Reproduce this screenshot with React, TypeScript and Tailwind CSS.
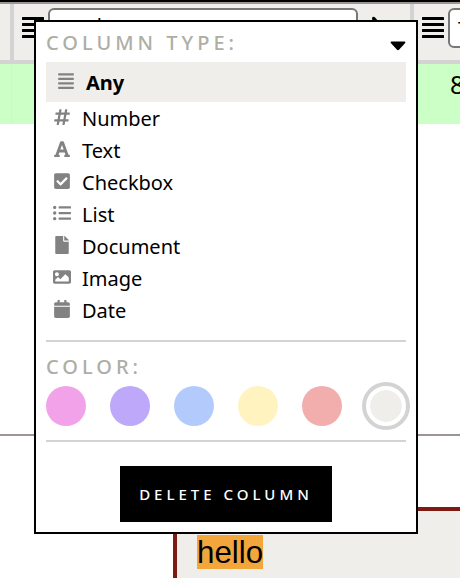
import React from "react";
import {
  FaAlignJustify,
  FaHashtag,
  FaFont,
  FaCheckSquare,
  FaListUl,
  FaFile,
  FaImage,
  FaCalendar,
} from "react-icons/fa";

const types = [
  { name: "Number", Icon: FaHashtag },
  { name: "Text", Icon: FaFont },
  { name: "Checkbox", Icon: FaCheckSquare },
  { name: "List", Icon: FaListUl },
  { name: "Document", Icon: FaFile },
  { name: "Image", Icon: FaImage },
  { name: "Date", Icon: FaCalendar },
];

const colors = ["bg-[#f2a2e8]", "bg-[#bea8f9]", "bg-[#b3cbfc]", "bg-[#fff4c0]", "bg-[#f2adad]"];

function LinesIcon() {
  return (
    <svg className="mt-[9px] h-[22px] w-[22px] shrink-0" viewBox="0 0 22 22">
      <rect y="0" width="22" height="3" rx=".6" />
      <rect y="6" width="22" height="3" rx=".6" />
      <rect y="12" width="22" height="3" rx=".6" />
      <rect y="18" width="22" height="3" rx=".6" />
    </svg>
  );
}

function Sheet() {
  return (
    <div className="flex h-full flex-col">
      <div className="h-0.5 shrink-0 bg-black" />
      <div className="h-0.5 shrink-0 bg-[#9b9695]" />
      <div className="flex h-[60px] shrink-0 border-b-4 border-[#d3d3d3] bg-[#efeeeb]">
        <div className="w-[14px] shrink-0 border-r-4 border-[#d3d3d3]" />
        <div className="flex w-[400px] shrink-0 items-start border-r-4 border-[#d3d3d3] pt-1 pl-2">
          <LinesIcon />
          <div className="ml-1 h-10 w-[310px] shrink-0 rounded-md border-2 border-[#777] bg-white pl-[25px] text-[20px] leading-[32px]">
            column
          </div>
          <svg className="mt-1 ml-[14px] h-6 w-4" viewBox="0 0 16 24">
            <path d="M0 6 Q1 4 3 5.5 L9 12 L2 20 Z" />
          </svg>
        </div>
        <div className="flex w-[200px] shrink-0 items-start pt-1 pl-2">
          <LinesIcon />
          <div className="ml-1 h-10 w-[160px] shrink-0 rounded-md border-2 border-[#777] bg-white pl-[8px] text-[20px] leading-[38px]">
            Text
          </div>
        </div>
      </div>
      <div className="flex h-[60px] shrink-0 bg-[#ccffc6]">
        <div className="w-3 shrink-0 border-r border-[#c8f8c3]" />
        <div className="ml-[438px] pt-1 text-[25px] leading-[33px]">8</div>
      </div>
      <div className="h-[310px] shrink-0" />
      <div className="h-0.5 shrink-0 bg-[#9b9695]" />
      <div className="mt-[71px] ml-[173px] h-[71px] w-[300px] shrink-0 border-t-4 border-l-4 border-[#7d1a12] bg-[#efeeeb] pt-6 pl-5">
        <span className="inline-block h-[34px] bg-[#f2a63c] font-['Liberation_Sans',Arial,sans-serif] text-[31.3px] leading-[35px]">
          hello
        </span>
      </div>
    </div>
  );
}

function ColumnMenu() {
  return (
    <div className="absolute top-5 left-[34px] flex h-[514px] w-[384px] flex-col border-2 border-black bg-white px-[10px]">
      <div className="flex h-10 shrink-0 items-center justify-between">
        <div className="pt-0.5 text-[20px] leading-10 font-medium tracking-[4px] text-[#aeaea6]">COLUMN TYPE:</div>
        <svg className="mt-[7px] h-[10px] w-4" viewBox="0 0 16 10">
          <path d="M1.4 .5H14.6Q16 .8 15.2 2L9.2 8.6Q8 9.8 6.8 8.6L.8 2Q0 .8 1.4 .5Z" />
        </svg>
      </div>
      <div className="flex h-10 shrink-0 items-center bg-[#efeeeb] pl-[11px]">
        <FaAlignJustify className="mb-0.5 size-[18px] text-[#828282]" />
        <span className="ml-[11px] pt-0.5 text-[20px] font-bold">Any</span>
      </div>
      <div className="shrink-0">
        {types.map(({ name, Icon }) => (
          <div key={name} className="flex h-8 items-center pl-[7px]">
            <Icon className="mb-0.5 size-[18px] text-[#828282]" />
            <span className="ml-[11px] pt-0.5 text-[20px]">{name}</span>
          </div>
        ))}
      </div>
      <div className="mt-[14px] h-0.5 shrink-0 bg-[#d3d3d3]" />
      <div className="mt-[9px] h-[35px] shrink-0 text-[20px] leading-8 font-medium tracking-[4px] text-[#aeaea6]">COLOR:</div>
      <div className="flex h-10 shrink-0 gap-6">
        {colors.map((c) => (
          <div key={c} className={`size-10 shrink-0 rounded-full ${c}`} />
        ))}
        <div className="size-10 shrink-0 rounded-full border-4 border-white bg-[#efeeeb] bg-clip-padding ring-4 ring-[#d3d3d3]" />
      </div>
      <div className="mt-[14px] h-0.5 shrink-0 bg-[#d3d3d3]" />
      <button className="mt-6 flex h-14 w-[212px] shrink-0 items-center justify-center self-center bg-black text-[15px] font-medium tracking-[4px] text-white">
        DELETE COLUMN
      </button>
    </div>
  );
}

export default function App() {
  return (
    <div className="relative h-[578px] w-[460px] overflow-hidden bg-white font-['Noto_Sans',sans-serif] text-black">
      <Sheet />
      <ColumnMenu />
    </div>
  );
}
